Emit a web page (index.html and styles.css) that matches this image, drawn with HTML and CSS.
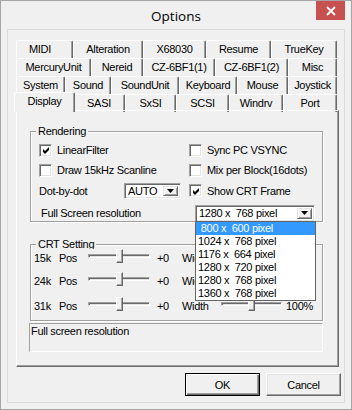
FILE: index.html
```html
<!DOCTYPE html>
<html>
<head>
<meta charset="utf-8">
<title>Options</title>
<link rel="stylesheet" href="styles.css">
</head>
<body>
<div class="window">
  <div class="titlebar">
    <div></div>
    <div class="title">Options</div>
    <div class="close">
      <svg width="10" height="10" viewBox="0 0 10 10"><path d="M1 1L9 9M9 1L1 9" stroke="#fff" stroke-width="1.8"/></svg>
    </div>
  </div>
  <div class="client">
    <div class="tabctl">
      <div class="tabrow r1">
        <div class="tab midi">MIDI</div>
        <div class="tab">Alteration</div>
        <div class="tab">X68030</div>
        <div class="tab">Resume</div>
        <div class="tab">TrueKey</div>
      </div>
      <div class="tabrow r2">
        <div class="tab">MercuryUnit</div>
        <div class="tab">Nereid</div>
        <div class="tab">CZ-6BF1(1)</div>
        <div class="tab">CZ-6BF1(2)</div>
        <div class="tab">Misc</div>
      </div>
      <div class="tabrow r3">
        <div class="tab">System</div>
        <div class="tab">Sound</div>
        <div class="tab">SoundUnit</div>
        <div class="tab">Keyboard</div>
        <div class="tab">Mouse</div>
        <div class="tab">Joystick</div>
      </div>
      <div class="tabrow r4">
        <div class="tab sel">Display</div>
        <div class="tab">SASI</div>
        <div class="tab">SxSI</div>
        <div class="tab">SCSI</div>
        <div class="tab">Windrv</div>
        <div class="tab">Port</div>
      </div>
      <div class="panel">
        <div class="group rendering">
          <div class="gtitle">Rendering</div>
          <div class="rgrid">
            <div class="cell"><span class="cb checked"><svg width="9" height="9" viewBox="0 0 9 9"><polygon points="1,3 3,5 7,1 7,4 3,8 1,6" fill="#000"/></svg></span><span>LinearFilter</span></div>
            <div class="cell"><span class="cb"></span><span>Sync PC VSYNC</span></div>
            <div class="cell"><span class="cb"></span><span>Draw 15kHz Scanline</span></div>
            <div class="cell"><span class="cb"></span><span>Mix per Block(16dots)</span></div>
            <div class="cell"><span class="lbl-dot">Dot-by-dot</span>
              <div class="combo auto"><span class="val">AUTO</span><span class="ddbtn"><svg width="7" height="4" viewBox="0 0 7 4"><polygon points="0,0 7,0 3.5,4" fill="#000"/></svg></span></div>
            </div>
            <div class="cell"><span class="cb checked"><svg width="9" height="9" viewBox="0 0 9 9"><polygon points="1,3 3,5 7,1 7,4 3,8 1,6" fill="#000"/></svg></span><span>Show CRT Frame</span></div>
          </div>
          <div class="row4">
            <span class="lbl-full">Full Screen resolution</span>
            <div class="combo res"><span class="val">1280 x  768 pixel</span><span class="ddbtn"><svg width="7" height="4" viewBox="0 0 7 4"><polygon points="0,0 7,0 3.5,4" fill="#000"/></svg></span>
              <div class="dropdown">
                <div class="item hl"> 800 x  600 pixel</div>
                <div class="item">1024 x  768 pixel</div>
                <div class="item">1176 x  664 pixel</div>
                <div class="item">1280 x  720 pixel</div>
                <div class="item">1280 x  768 pixel</div>
                <div class="item">1360 x  768 pixel</div>
              </div>
            </div>
          </div>
        </div>
        <div class="group crt">
          <div class="gtitle clip">CRT Setting</div>
          <div class="cgrid">
            <span>15k</span><span>Pos</span><div class="slider"><div class="track"></div><div class="thumb"></div></div><span></span><span>+0</span><span>Width</span><div class="slider"><div class="track"></div><div class="thumb"></div></div><span></span><span></span>
            <span>24k</span><span>Pos</span><div class="slider"><div class="track"></div><div class="thumb"></div></div><span></span><span>+0</span><span>Width</span><div class="slider"><div class="track"></div><div class="thumb"></div></div><span></span><span></span>
            <span>31k</span><span>Pos</span><div class="slider"><div class="track"></div><div class="thumb"></div></div><span></span><span>+0</span><span>Width</span><div class="slider"><div class="track"></div><div class="thumb"></div></div><span></span><span>100%</span>
          </div>
        </div>
        <div class="status">Full screen resolution</div>
      </div>
    </div>
    <div class="buttons">
      <button class="btn default">OK</button>
      <button class="btn">Cancel</button>
    </div>
  </div>
</div>
</body>
</html>
```

FILE: styles.css
```css
* { box-sizing: border-box; }
html, body { margin: 0; padding: 0; }
body {
  width: 352px;
  height: 410px;
  overflow: hidden;
  background: #f0f0f0;
  font-family: "Liberation Sans", Arial, sans-serif;
  font-size: 11px;
  letter-spacing: -0.3px;
  color: #000;
}
.window {
  width: 352px;
  height: 410px;
  border: 1px solid #a6a6a6;
  background: #f0f0f0;
  display: flex;
  flex-direction: column;
  padding: 0 6px 6px 6px;
}
.titlebar {
  height: 28px;
  flex: none;
  display: grid;
  grid-template-columns: 1fr auto 1fr;
  align-items: start;
}
.title {
  font-family: "Open Sans", "Noto Sans", sans-serif;
  font-size: 13.5px;
  letter-spacing: 0;
  line-height: 18px;
  padding-top: 6px;
  color: #000;
}
.close {
  justify-self: end;
  width: 29px;
  height: 19px;
  background: #c75050;
  display: flex;
  align-items: center;
  justify-content: center;
}
.client {
  flex: 1;
  border: 1px solid #dadada;
  display: flex;
  flex-direction: column;
  padding: 10px 0 0 8px;
}
.tabctl {
  width: 323px;
  display: flex;
  flex-direction: column;
}
.tabrow {
  display: grid;
  height: 18px;
  width: 321px;
}
.r1 { grid-template-columns: 57px 70px 63px 65px 66px; }
.r2 { grid-template-columns: 75px 52px 72px 73px 49px; }
.r3 { grid-template-columns: 49px 46px 68px 58px 51px 49px; }
.r4 { grid-template-columns: 57px 52px 51px 53px 54px 54px; }
.tab {
  background: #f0f0f0;
  border-left: 1px solid #fff;
  border-top: 1px solid #fff;
  border-right: 1px solid #696969;
  box-shadow: inset -1px 0 0 #a0a0a0;
  border-radius: 2px 2px 0 0;
  text-align: center;
  line-height: 16px;
  white-space: nowrap;
}
.tab.midi { padding-right: 9px; }
.tab.sel {
  margin: -2px -2px 0 -2px;
  position: relative;
  z-index: 2;
  line-height: 16px;
}
.panel {
  margin-top: -2px;
  height: 257px;
  border-left: 1px solid #fff;
  border-top: 1px solid #fff;
  border-right: 1px solid #696969;
  border-bottom: 1px solid #696969;
  box-shadow: inset -1px -1px 0 #a0a0a0;
  display: flex;
  flex-direction: column;
}
.group {
  margin-left: 13px;
  width: 293px;
  border: 1px solid #a0a0a0;
  box-shadow: inset 1px 1px 0 #fff, 1px 1px 0 #fff;
}
.rendering {
  margin-top: 20px;
  height: 91px;
}
.crt {
  margin-top: 22px;
  height: 77px;
}
.gtitle {
  margin: -7px 0 0 5px;
  padding: 0 2px;
  width: max-content;
  line-height: 13px;
  height: 13px;
  background: #f0f0f0;
}
.gtitle.clip { height: 11px; overflow: hidden; }
.rgrid {
  display: grid;
  grid-template-columns: 150px 1fr;
  grid-template-rows: 20px 20px 21px;
  padding-left: 8px;
  margin-top: 2px;
}
.cell {
  display: flex;
  align-items: center;
  gap: 5px;
  white-space: nowrap;
}
.cb {
  flex: none;
  width: 13px;
  height: 13px;
  background: #fff;
  border: 1px solid;
  border-color: #a0a0a0 #fff #fff #a0a0a0;
  box-shadow: inset 1px 1px 0 #696969, inset -1px -1px 0 #e3e3e3;
  display: flex;
  align-items: center;
  justify-content: center;
  padding: 1px 0 0 1px;
}
.cb svg { display: block; }
.lbl-dot { width: 80px; }
.combo {
  position: relative;
  background: #fff;
  border: 1px solid;
  border-color: #a0a0a0 #fff #fff #a0a0a0;
  box-shadow: inset 1px 1px 0 #696969, inset -1px -1px 0 #e3e3e3;
  display: flex;
  align-items: center;
  padding: 2px 2px 2px 2px;
}
.combo.auto { width: 57px; height: 16px; }
.combo.res { width: 120px; height: 17px; }
.combo .val {
  flex: 1;
  padding-left: 1px;
  white-space: pre;
  line-height: 12px;
}
.ddbtn {
  flex: none;
  width: 15px;
  height: 100%;
  background: #f0f0f0;
  border: 1px solid;
  border-color: #e3e3e3 #696969 #696969 #e3e3e3;
  box-shadow: inset 1px 1px 0 #fff, inset -1px -1px 0 #a0a0a0;
  display: flex;
  align-items: center;
  justify-content: center;
}
.ddbtn svg { display: block; }
.row4 {
  display: flex;
  align-items: center;
  height: 24px;
  padding-left: 10px;
}
.lbl-full { width: 154px; white-space: nowrap; }
.dropdown {
  position: absolute;
  top: 100%;
  left: -1px;
  width: 121px;
  height: 80px;
  background: #fff;
  border: 1px solid #646464;
  z-index: 5;
}
.item {
  height: 13px;
  line-height: 13px;
  padding-left: 2px;
  white-space: pre;
  color: #000;
}
.item.hl { background: #3399ff; color: #fff; }
.cgrid {
  display: grid;
  grid-template-columns: 25px 29px 62px 7px 25px 39px 61px 4px auto;
  grid-template-rows: 23px 25px 20px;
  align-items: start;
  padding-left: 3px;
  margin-top: -1px;
  line-height: 20px;
  white-space: nowrap;
}
.slider {
  display: grid;
  height: 14px;
  margin-top: 1px;
}
.track, .thumb { grid-area: 1 / 1; }
.track {
  align-self: center;
  height: 4px;
  border: 1px solid;
  border-color: #a0a0a0 #fff #fff #a0a0a0;
  box-shadow: inset 1px 1px 0 #696969;
  background: #e3e3e3;
}
.thumb {
  justify-self: center;
  width: 7px;
  height: 14px;
  background: #f0f0f0;
  border: 1px solid;
  border-color: #fff #696969 #696969 #fff;
  box-shadow: inset -1px -1px 0 #a0a0a0;
}
.status {
  margin: 2px 0 0 12px;
  width: 294px;
  height: 29px;
  border: 1px solid;
  border-color: #a0a0a0 #fff #fff #a0a0a0;
  padding: 1px 0 0 1px;
  line-height: 13px;
}
.buttons {
  display: flex;
  justify-content: flex-end;
  gap: 6px;
  margin-top: 6px;
  padding-right: 3px;
}
.btn {
  width: 75px;
  height: 23px;
  margin: 0;
  padding: 0;
  font-family: inherit;
  font-size: 11px;
  letter-spacing: -0.3px;
  color: #000;
  background: #f0f0f0;
  border: 1px solid;
  border-color: #fff #696969 #696969 #fff;
  box-shadow: inset -1px -1px 0 #a0a0a0, inset 1px 1px 0 #e3e3e3;
}
.btn.default {
  border-color: #000;
  box-shadow: inset 1px 1px 0 #fff, inset -1px -1px 0 #696969, inset -2px -2px 0 #a0a0a0;
}
```
